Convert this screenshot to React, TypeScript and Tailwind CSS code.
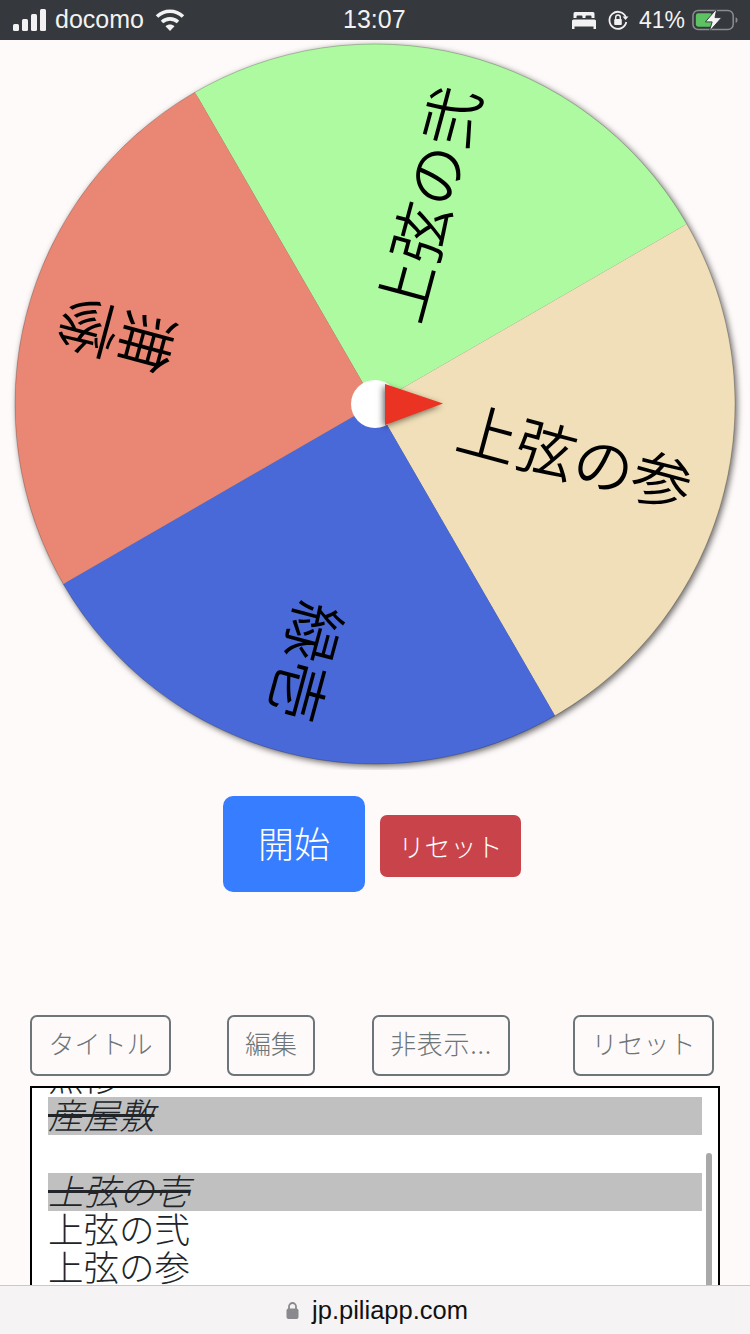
const CX = 375;
const CY = 404;
const R = 360;

const slices = [
  { from: -120, to: -30, color: "#aefaa0", label: "上弦の弐" },
  { from: -30, to: 60, color: "#f0dfb8", label: "上弦の参" },
  { from: 60, to: 150, color: "#4a69d9", label: "緑壱" },
  { from: 150, to: 240, color: "#e98674", label: "無惨" },
];

const slicePath = (from: number, to: number) => {
  const a = (from * Math.PI) / 180;
  const b = (to * Math.PI) / 180;
  const x1 = CX + R * Math.cos(a);
  const y1 = CY + R * Math.sin(a);
  const x2 = CX + R * Math.cos(b);
  const y2 = CY + R * Math.sin(b);
  return `M${CX} ${CY}L${x1} ${y1}A${R} ${R} 0 0 1 ${x2} ${y2}Z`;
};

const rows = [
  { text: "無惨" },
  { text: "産屋敷", off: true },
  { text: "" },
  { text: "上弦の壱", off: true },
  { text: "上弦の弐" },
  { text: "上弦の参" },
  { text: "上弦の肆" },
];

function StatusBar() {
  return (
    <div className="h-10 bg-[#35383d] text-[#f2f2f2] flex items-center pl-[13px] pr-[12px] font-['Liberation_Sans',sans-serif] text-[25px]">
      <div className="flex items-center w-[330px]">
        <svg width="33" height="22" viewBox="0 0 33 22" fill="currentColor">
          <rect x="0" y="15" width="6" height="7" rx="1.5" />
          <rect x="9" y="10" width="6" height="12" rx="1.5" />
          <rect x="18" y="5" width="6" height="17" rx="1.5" />
          <rect x="27" y="0" width="6" height="22" rx="1.5" />
        </svg>
        <span className="ml-[9px]">docomo</span>
        <svg className="ml-[11px]" width="30" height="22" viewBox="0 0 30 22" fill="none" stroke="currentColor" strokeWidth="3.6">
          <path d="M2 7.5C9.5 0.5 20.5 0.5 28 7.5" />
          <path d="M7 13C11.5 8.8 18.5 8.8 23 13" />
          <path d="M15 22L10.5 17.2C13 15 17 15 19.5 17.2Z" fill="currentColor" stroke="none" />
        </svg>
      </div>
      <span className="font-medium">13:07</span>
      <div className="ml-auto flex items-center">
        <svg width="24" height="17" viewBox="0 0 24 17" fill="currentColor">
          <path d="M3 0H21A1.5 1.5 0 0 1 22.500 1.500V6H19.500V4.500A1 1 0 0 0 18.500 3.500H14.500A1 1 0 0 0 13.500 4.500V6H10.500V4.500A1 1 0 0 0 9.500 3.500H5.500A1 1 0 0 0 4.500 4.500V6H1.500V1.500A1.500 1.500 0 0 1 3 0Z" />
          <path d="M1.500 7.500H22.500A1.500 1.500 0 0 1 24 9V17H21.500V14.500H2.500V17H0V9A1.500 1.500 0 0 1 1.500 7.500Z" />
        </svg>
        <svg className="ml-[11px]" width="22" height="22" viewBox="0 0 22 22" fill="none" stroke="currentColor" strokeWidth="1.8">
          <path d="M18.800 8A8.500 8.500 0 1 0 19.300 13" />
          <path d="M21.500 7.500L18.500 11L15.500 7.500Z" fill="currentColor" stroke="none" />
          <rect x="7.200" y="10" width="7.600" height="6" rx="1" fill="currentColor" stroke="none" />
          <path d="M8.700 10V8.300A2.300 2.300 0 0 1 13.300 8.300V10" strokeWidth="1.400" />
        </svg>
        <span className="ml-[10px] text-[23px]">41%</span>
        <svg className="ml-[7px]" width="46" height="24" viewBox="0 0 48 24" fill="none">
          <rect x="1" y="2" width="42" height="20" rx="5.500" stroke="#8a8c8f" strokeWidth="1.600" />
          <rect x="4" y="5" width="17" height="14" rx="2.500" fill="#5cc262" />
          <path d="M45.500 9V15C47 14.500 47.500 13.500 47.500 12C47.500 10.500 47 9.500 45.500 9Z" fill="#8a8c8f" />
          <path d="M26 0L14 14H21L18 24L31 9.500H24Z" fill="#f4f4f4" stroke="#35383d" strokeWidth="1" />
        </svg>
      </div>
    </div>
  );
}

function Wheel() {
  return (
    <svg width="750" height="730" viewBox="0 40 750 730" className="block font-['Noto_Sans_CJK_JP',sans-serif]">
      <g className="drop-shadow-[2px_2px_3px_rgba(0,0,0,0.6)]">
        {slices.map((s) => (
          <path key={s.label} d={slicePath(s.from, s.to)} fill={s.color} />
        ))}
        <circle cx={CX} cy={CY} r={R} fill="none" stroke="rgba(0,0,0,0.35)" strokeWidth="0.6" />
      </g>
      {slices.map((s) => (
        <text
          key={s.label}
          x={CX + 327}
          y={CY - 4}
          fontSize="60"
          fontWeight="350"
          fill="#000"
          textAnchor="end"
          dominantBaseline="central"
          transform={`rotate(${(s.from + s.to) / 2} ${CX} ${CY})`}
        >
          {s.label}
        </text>
      ))}
      <circle cx={CX} cy={CY} r="24" fill="#fff" />
      <path
        d="M385 384L443 403.500L385 425Z"
        fill="#ea3323"
        className="drop-shadow-[-2px_2px_3px_rgba(0,0,0,0.55)]"
      />
    </svg>
  );
}

function OutlineButton({ label, className }: { label: string; className: string }) {
  return (
    <button className={`h-[61px] pb-[6px] rounded-[7px] border-2 border-[#6c7578] text-[26px] text-[#6c7578] flex items-center justify-center ${className}`}>
      {label}
    </button>
  );
}

export default function App() {
  return (
    <div className="relative h-[1334px] w-[750px] overflow-hidden bg-[#fffafa] font-['Noto_Sans_CJK_JP',sans-serif] font-light">
      <StatusBar />
      <Wheel />

      <div className="mt-[26px] ml-[223px] flex items-center gap-[15px]">
        <button className="h-24 w-[142px] pb-[4px] rounded-[10px] bg-[#377dff] text-[36px] text-white">開始</button>
        <button className="mt-[4px] h-[62px] w-[141px] pb-[2px] rounded-[7px] bg-[#c9444a] text-[26px] text-white">リセット</button>
      </div>

      <div className="-mt-[1px] pt-[124px] ml-[30px] flex">
        <OutlineButton label="タイトル" className="w-[141px]" />
        <OutlineButton label="編集" className="ml-[56px] w-[88px]" />
        <OutlineButton label="非表示..." className="ml-[57px] w-[138px] tracking-[0.7px]" />
        <OutlineButton label="リセット" className="ml-[63px] w-[141px]" />
      </div>

      <div className="relative mt-[10px] ml-[30px] h-[260px] w-[690px] overflow-hidden border-2 border-black bg-white">
        <div className="-mt-[29px] pl-4 pr-4 text-[35.500px] leading-[34px] text-[#212529]">
          {rows.map((r, i) => (
            <div key={i} className={`h-[38px] whitespace-nowrap ${r.off ? "bg-[#c0c0c0] italic line-through" : ""}`}>
              {r.text}
            </div>
          ))}
        </div>
        <div className="absolute right-[6px] top-[65px] bottom-0 w-[6px] rounded-full bg-[#a8a8a8]" />
      </div>

      <div className="absolute bottom-0 left-0 flex h-[49px] w-full items-center justify-center border-t border-[#c9c9c9] bg-[#f5f3f3] pl-[4px] font-['Liberation_Sans',sans-serif] text-[25.500px] font-normal text-[#111]">
        <svg className="mr-[13px]" width="13" height="18" viewBox="0 0 13 18" fill="#8a8a8e">
          <path d="M3 8V5.500A3.500 3.500 0 0 1 10 5.500V8" fill="none" stroke="#8a8a8e" strokeWidth="1.800" />
          <rect x="0.500" y="7.500" width="12" height="10.500" rx="2" />
        </svg>
        <span>jp.piliapp.com</span>
      </div>
    </div>
  );
}
